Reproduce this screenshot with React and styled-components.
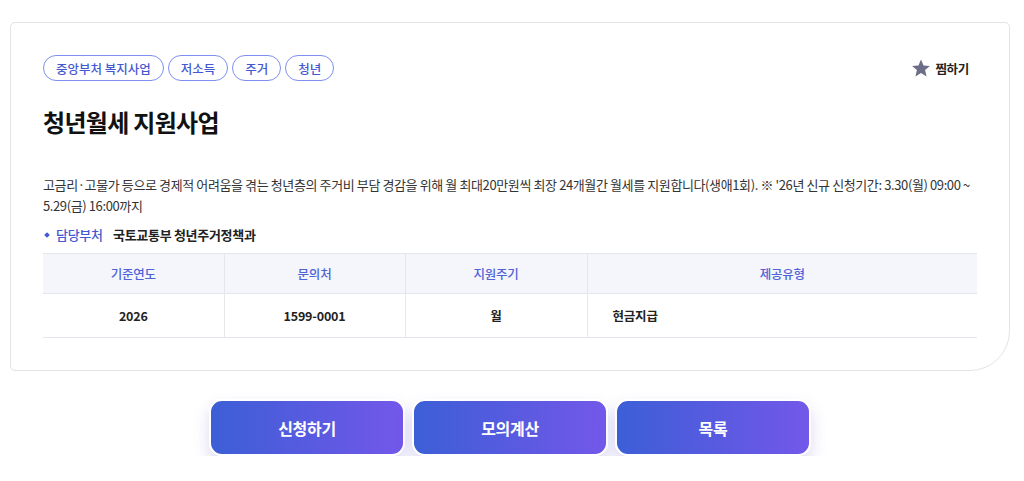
import React from "react";
import styled, { createGlobalStyle } from "styled-components";

const Global = createGlobalStyle`
  html, body { margin: 0; padding: 0; background: #ffffff; }
  body { font-family: "Noto Sans CJK KR", "Noto Sans", sans-serif; color: #222; }
  * { box-sizing: border-box; }
`;

const Page = styled.div`
  width: 1010px;
  padding: 22px 0 0 10px;
`;

const Card = styled.section`
  width: 1000px;
  border: 1px solid #e4e4e6;
  border-radius: 5px 5px 40px 5px;
  padding: 32px 32px 32px 32px;
  background: #fff;
`;

const TopRow = styled.div`
  display: flex;
  justify-content: space-between;
  align-items: center;
`;

const Tags = styled.div`
  display: flex;
  gap: 4px;
`;

const Tag = styled.span`
  display: inline-flex;
  align-items: center;
  height: 26px;
  padding: 0 12px;
  border: 1.5px solid #7d8ff0;
  border-radius: 13px;
  font-size: 12.5px;
  font-weight: 500;
  color: #4458d0;
  letter-spacing: 0;
`;

const Like = styled.button`
  display: inline-flex;
  align-items: center;
  gap: 4px;
  border: 0;
  background: none;
  padding: 0 8px 0 0;
  font-family: inherit;
  font-size: 12.5px;
  font-weight: 700;
  color: #222;
  letter-spacing: -0.3px;
  cursor: pointer;
`;

const Title = styled.h1`
  margin: 24px 0 0;
  font-size: 24px;
  line-height: 34px;
  font-weight: 700;
  color: #111;
  letter-spacing: -0.7px;
`;

const Desc = styled.p`
  margin: 35px 0 0;
  font-size: 13px;
  line-height: 21px;
  color: #333;
  letter-spacing: -0.39px;
`;

const Dept = styled.div`
  display: flex;
  align-items: center;
  margin-top: 9px;
  font-size: 13px;
  line-height: 20px;
  letter-spacing: -0.3px;
`;

const DeptLabel = styled.span`
  display: inline-flex;
  align-items: center;
  color: #4458d0;
  font-weight: 500;
  width: 70px;
  &::before {
    content: "";
    width: 4px;
    height: 4px;
    margin: 0 7px 0 2px;
    background: #4458d0;
    transform: rotate(45deg);
  }
`;

const DeptValue = styled.span`
  color: #222;
  font-weight: 700;
`;

const Table = styled.table`
  width: 100%;
  margin-top: 8px;
  border-collapse: collapse;
  table-layout: fixed;
  font-size: 12.5px;
  letter-spacing: -0.2px;
`;

const Th = styled.th`
  height: 40px;
  padding: 0;
  background: #f4f6fb;
  color: #4f63d8;
  font-weight: 500;
  text-align: center;
  border-top: 1px solid #e4e6ec;
  border-bottom: 1px solid #e4e6ec;
  & + & { border-left: 1px solid #e4e6ec; }
`;

const Td = styled.td`
  height: 44px;
  padding: 0;
  color: #222;
  font-weight: 700;
  text-align: ${(p) => (p.$left ? "left" : "center")};
  padding-left: ${(p) => (p.$left ? "25px" : "0")};
  border-bottom: 1px solid #e4e6ec;
  & + & { border-left: 1px solid #e8e8ea; }
`;

const Actions = styled.div`
  display: flex;
  justify-content: center;
  gap: 7px;
  width: 1000px;
  margin-top: 28px;
`;

const ActionButton = styled.button`
  width: 196px;
  height: 57px;
  border: 2px solid #fff;
  border-radius: 13px;
  background: linear-gradient(90deg, #3c5fd6 0%, #5a5ae0 55%, #7358ea 100%);
  box-shadow: 0 8px 16px rgba(90, 80, 200, 0.22);
  color: #fff;
  font-family: inherit;
  font-size: 16px;
  font-weight: 700;
  letter-spacing: -0.3px;
  cursor: pointer;
`;

const Star = () => (
  <svg width="20" height="20" viewBox="0 0 24 24" aria-hidden="true">
    <path
      d="M12 1.8l3.05 7.1 7.7.6-5.86 5.03 1.8 7.52L12 18.02l-6.69 4.03 1.8-7.52L1.25 9.5l7.7-.6z"
      fill="#6b6e86"
    />
  </svg>
);

export default function App() {
  return (
    <Page>
      <Global />
      <Card>
        <TopRow>
          <Tags>
            <Tag>중앙부처 복지사업</Tag>
            <Tag>저소득</Tag>
            <Tag>주거</Tag>
            <Tag>청년</Tag>
          </Tags>
          <Like>
            <Star />
            찜하기
          </Like>
        </TopRow>
        <Title>청년월세 지원사업</Title>
        <Desc>
          고금리·고물가 등으로 경제적 어려움을 겪는 청년층의 주거비 부담 경감을 위해 월 최대20만원씩 최장 24개월간 월세를 지원합니다(생애1회). ※ '26년 신규 신청기간: 3.30(월) 09:00 ~ 5.29(금) 16:00까지
        </Desc>
        <Dept>
          <DeptLabel>담당부처</DeptLabel>
          <DeptValue>국토교통부 청년주거정책과</DeptValue>
        </Dept>
        <Table>
          <colgroup>
            <col style={{ width: "181px" }} />
            <col style={{ width: "181px" }} />
            <col style={{ width: "182px" }} />
            <col />
          </colgroup>
          <thead>
            <tr>
              <Th>기준연도</Th>
              <Th>문의처</Th>
              <Th>지원주기</Th>
              <Th>제공유형</Th>
            </tr>
          </thead>
          <tbody>
            <tr>
              <Td>2026</Td>
              <Td>1599-0001</Td>
              <Td>월</Td>
              <Td $left>현금지급</Td>
            </tr>
          </tbody>
        </Table>
      </Card>
      <Actions>
        <ActionButton>신청하기</ActionButton>
        <ActionButton>모의계산</ActionButton>
        <ActionButton>목록</ActionButton>
      </Actions>
    </Page>
  );
}
